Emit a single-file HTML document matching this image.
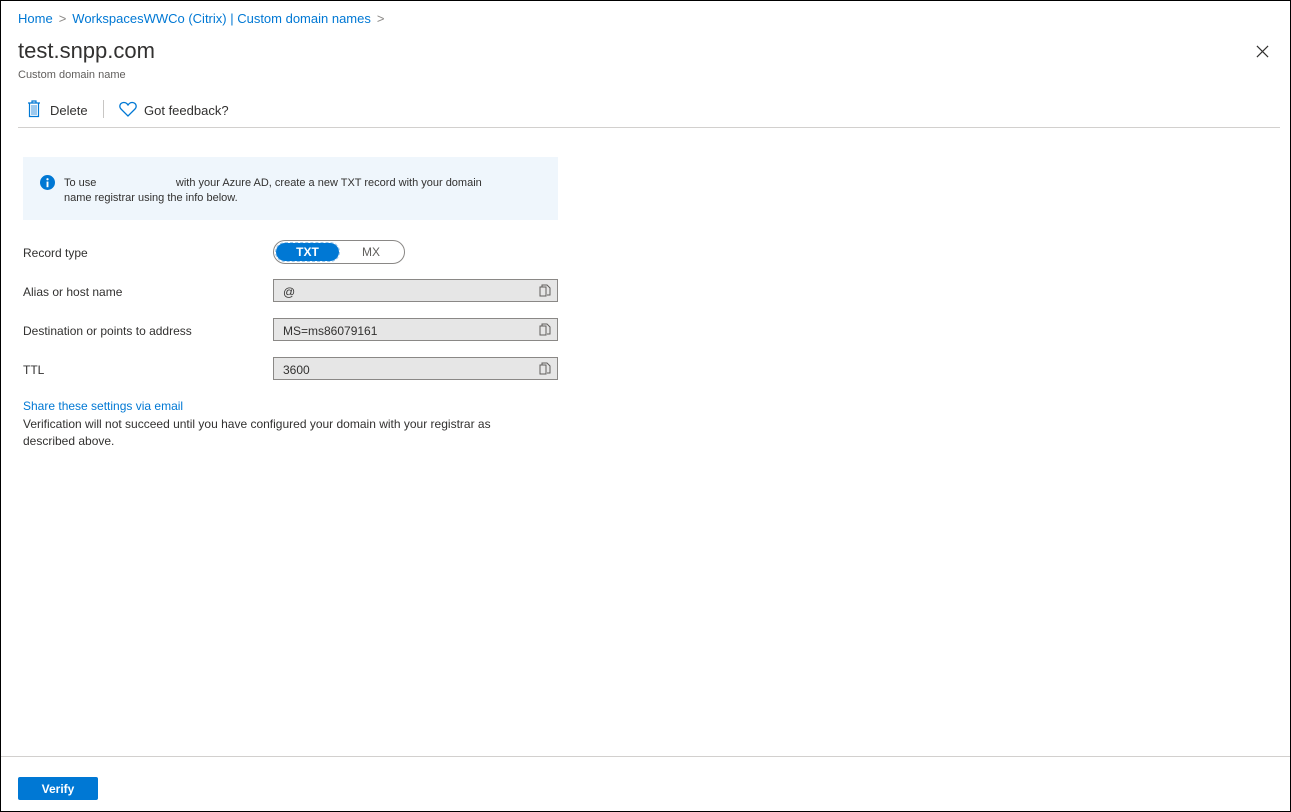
<!DOCTYPE html>
<html><head><style>
*{box-sizing:border-box;margin:0;padding:0}
body{width:1291px;height:812px;background:#fff;font-family:"Liberation Sans",sans-serif;color:#323130;position:relative;overflow:hidden}
.frame{position:absolute;left:0;top:0;width:1291px;height:812px;border:1px solid #000;z-index:5}
.a{position:absolute;white-space:nowrap}
.bc{top:11px;left:18px;font-size:13px;color:#0078d4}
.bc span{color:#8a8886;margin:0 6px}
h1{position:absolute;top:38px;left:18px;font-size:22px;font-weight:normal;color:#323130}
.sub{top:69px;left:18px;font-size:11px;color:#605e5c}
.tb{top:103px;font-size:13px}
.hr{position:absolute;left:18px;right:11px;top:127px;height:1px;background:#d2d0ce}
.info{position:absolute;left:23px;top:157px;width:535px;height:63px;background:#eff6fc}
.info p{position:absolute;left:41px;top:19px;font-size:11px;line-height:15px;color:#323130;width:440px}
.lbl{left:23px;font-size:12px;color:#323130}
.f{position:absolute;left:273px;width:285px;height:23px;background:#e6e6e6;border:1px solid #8a8886;font-size:12px;padding:5px 9px 0;color:#323130}
.f svg{position:absolute;right:6px;top:4px}
.tog{position:absolute;left:273px;top:240px;width:132px;height:24px;border:1px solid #8a8886;border-radius:12px}
.tog .on{position:absolute;left:2px;top:2px;width:63px;height:18px;border-radius:9px;background:#0078d4;color:#fff;font-size:12px;font-weight:bold;text-align:center;line-height:18px;outline:1px dashed #9cc6ea}
.tog .off{position:absolute;left:88px;top:4px;font-size:12px;color:#605e5c}
.foot{position:absolute;left:0;right:0;top:756px;height:1px;background:#d2d0ce}
.btn{position:absolute;left:18px;top:777px;width:80px;height:23px;background:#0078d4;color:#fff;font-size:12px;font-weight:bold;text-align:center;line-height:24px;border-radius:2px}
</style></head><body>
<div class="frame"></div>
<div class="a bc">Home<span>&gt;</span>WorkspacesWWCo (Citrix) | Custom domain names<span>&gt;</span></div>
<h1>test.snpp.com</h1>
<div class="a sub">Custom domain name</div>
<svg class="a" style="left:1256px;top:45px" width="13" height="13" viewBox="0 0 14 14"><path d="M1 1L13 13M13 1L1 13" stroke="#323130" stroke-width="1.3"/></svg>
<svg class="a" style="left:27px;top:100px" width="14" height="18" viewBox="0 0 14 18"><path d="M1 3h12M5 3V1h4v2M2.5 3.5v13h9v-13" fill="none" stroke="#0078d4" stroke-width="1.2"/><rect x="4" y="5" width="6" height="10" fill="#9cc9ee"/></svg>
<div class="a tb" style="left:50px">Delete</div>
<div class="a" style="left:103px;top:100px;width:1px;height:18px;background:#c8c6c4"></div>
<svg class="a" style="left:119px;top:101px" width="18" height="16" viewBox="0 0 18 16"><path d="M9 15L2 8C0 6 0.5 2 4.5 1.5C6.5 1.3 8 2.5 9 4C10 2.5 11.5 1.3 13.5 1.5C17.5 2 18 6 16 8Z" fill="none" stroke="#0078d4" stroke-width="1.3"/></svg>
<div class="a tb" style="left:144px">Got feedback?</div>
<div class="hr"></div>
<div class="info">
<svg style="position:absolute;left:17px;top:18px" width="15" height="15" viewBox="0 0 16 16"><circle cx="8" cy="8" r="8" fill="#0078d4"/><rect x="7" y="7" width="2" height="6" fill="#fff"/><circle cx="8" cy="4.5" r="1.2" fill="#fff"/></svg>
<p>To use &nbsp;&nbsp;&nbsp;&nbsp;&nbsp;&nbsp;&nbsp;&nbsp;&nbsp;&nbsp;&nbsp;&nbsp;&nbsp;&nbsp;&nbsp;&nbsp;&nbsp;&nbsp;&nbsp;&nbsp;&nbsp;&nbsp;&nbsp;&nbsp; with your Azure AD, create a new TXT record with your domain name registrar using the info below.</p>
</div>
<div class="a lbl" style="top:246px">Record type</div>
<div class="tog"><div class="on">TXT</div><div class="off">MX</div></div>
<div class="a lbl" style="top:285px">Alias or host name</div>
<div class="f" style="top:279px">@<svg width="12" height="13" viewBox="0 0 12 13"><path d="M3 3V1h5l3 3v7H8M1 3h6v9H1z" fill="none" stroke="#605e5c"/></svg></div>
<div class="a lbl" style="top:324px">Destination or points to address</div>
<div class="f" style="top:318px">MS=ms86079161<svg width="12" height="13" viewBox="0 0 12 13"><path d="M3 3V1h5l3 3v7H8M1 3h6v9H1z" fill="none" stroke="#605e5c"/></svg></div>
<div class="a lbl" style="top:363px">TTL</div>
<div class="f" style="top:357px">3600<svg width="12" height="13" viewBox="0 0 12 13"><path d="M3 3V1h5l3 3v7H8M1 3h6v9H1z" fill="none" stroke="#605e5c"/></svg></div>
<div class="a" style="left:23px;top:399px;font-size:12px;color:#0078d4">Share these settings via email</div>
<div class="a" style="left:23px;top:416px;font-size:12px;line-height:17px;white-space:normal;width:515px">Verification will not succeed until you have configured your domain with your registrar as described above.</div>
<div class="foot"></div>
<div class="btn">Verify</div>
</body></html>
